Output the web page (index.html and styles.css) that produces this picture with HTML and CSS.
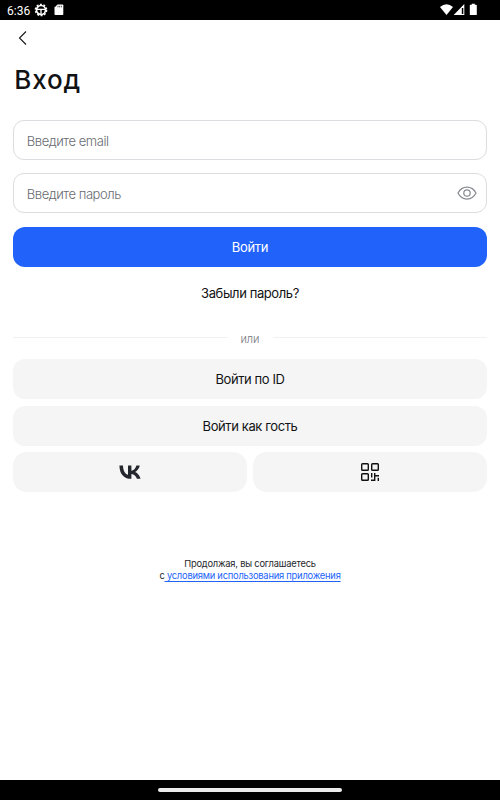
FILE: index.html
```html
<!DOCTYPE html>
<html lang="ru">
<head>
<meta charset="utf-8">
<title>Вход</title>
<link rel="stylesheet" href="styles.css">
</head>
<body>
<div class="screen">
  <header class="status">
    <span class="time">6:36</span>
    <svg class="gear" width="14" height="14" viewBox="0 0 14 14" fill="none" stroke="#fff"><circle cx="7" cy="7" r="4.500" stroke-width="1.700"/><circle cx="7" cy="7" r="5.700" stroke-width="1.300" stroke-dasharray="2 1.581"/><path d="M3 6.300h8M7 6v5" stroke-width="1.300"/></svg>
    <svg class="card" width="10" height="12" viewBox="0 0 10 12"><path d="M3.500 .5H8.500q.8 0 .8.800V10.200q0 .8-.8.8H1.300q-.8 0-.8-.8V3.500z" fill="#fff"/><path d="M4 1.800v1.500M5.700 1.800v1.500M7.400 1.800v1.500" stroke="#000" stroke-width=".7"/></svg>
    <svg class="radio" width="40" height="14" viewBox="0 0 40 14"><path d="M0 4Q6.500-1.500 13 4L6.500 12z" fill="#fff"/><path d="M24.300 1v11H13.700z" fill="#fff"/><path d="M21.800 5h1.500v6h-1.500z" fill="#000"/><path d="M31.800 1.700V.8h3v.9h1.300q.7 0 .7.700v9q0 .7-.7.700h-5.600q-.7 0-.7-.7v-9q0-.7.700-.7z" fill="#fff"/></svg>
  </header>
  <main class="page">
    <svg class="back" width="10" height="16" viewBox="0 0 10 16" fill="none" stroke="#15171a" stroke-width="1.100"><path d="M8 1.500 1.500 8 8 14.500"/></svg>
    <h1 class="title">Вход</h1>
    <div class="field"><span class="label">Введите email</span></div>
    <div class="field"><span class="label">Введите пароль</span>
      <svg width="20" height="14" viewBox="0 0 20 14" fill="none" stroke="#888b91" stroke-width="1.250"><path d="M1 7C3 3 6.200 1 10 1s7 2 9 6c-2 4-5.200 6-9 6S3 11 1 7z"/><circle cx="10" cy="7" r="3.200"/></svg>
    </div>
    <div class="button primary"><span>Войти</span></div>
    <div class="forgot"><span>Забыли пароль?</span></div>
    <div class="divider"><i></i><span>или</span><i></i></div>
    <div class="options">
      <div class="button"><span>Войти по ID</span></div>
      <div class="button"><span>Войти как гость</span></div>
      <div class="pair">
        <div class="button"><svg width="22" height="14" viewBox="0 0 22 14" fill="#24282e"><path d="M12 13.800C4.700 13.800.6 8.800.4.400H4c.1 6.200 2.800 8.800 5 9.300V.4h3.400v5.400c2.100-.2 4.300-2.700 5-5.400h3.400c-.6 3.200-2.900 5.600-4.600 6.500 1.700.8 4.400 2.900 5.400 6.900h-3.700c-.8-2.500-2.800-4.400-5.500-4.700v4.700z"/></svg></div>
        <div class="button"><svg width="20" height="20" viewBox="0 0 20 20" fill="none" stroke="#111" stroke-width="1.400"><rect x="1.700" y="1.700" width="6.600" height="6.600" rx=".8"/><rect x="11.700" y="1.700" width="6.600" height="6.600" rx=".8"/><rect x="1.700" y="11.700" width="6.600" height="6.600" rx=".8"/><path d="M11.700 11v4.500M11 18.300h3.700V11M14.700 13.700H19M18.300 15.700V19"/></svg></div>
      </div>
    </div>
    <footer class="terms">
      <div><span>Продолжая, вы соглашаетесь</span></div>
      <div><span>с<a> условиями использования приложения</a></span></div>
    </footer>
  </main>
  <div class="nav"><div class="handle"></div></div>
</div>
</body>
</html>
```
FILE: styles.css
```css
* { box-sizing: border-box; }
body { margin: 0; font-family: Inter, "Liberation Sans", sans-serif; color: #111214; }
svg { display: block; flex: none; }
span { white-space: nowrap; }
.screen { width: 500px; height: 800px; background: #fff; display: flex; flex-direction: column; overflow: hidden; }
.status { height: 20px; background: #000; color: #fff; display: flex; align-items: center; padding: 0 20px 0 7px; flex: none; }
.time { font: 12px/20px Roboto, sans-serif; width: 26.500px; padding-top: 1px; }
.card { margin-left: 6.500px; }
.radio { margin-left: auto; }
.page { flex: 1; padding: 10px 13.330px 0; }
.back { margin-left: 5px; }
.title { margin: 18px 0 0; padding-left: 1px; height: 32px; font-size: 26px; line-height: 32px; font-weight: 500; letter-spacing: .8px; }
.field { height: 40px; margin-top: 13.300px; border: 1px solid #dcdde0; border-radius: 11px; padding: 0 9px 0 12.500px; display: flex; align-items: center; justify-content: space-between; font-size: 13px; letter-spacing: -.45px; font-weight: 300; color: #686b71; }
.title + .field { margin-top: 24px; }
.label { padding-top: 2px; }
.button { height: 40px; border-radius: 12px; background: #f5f5f5; display: flex; align-items: center; justify-content: center; font-size: 13px; letter-spacing: -.4px; }
.primary { margin-top: 13.300px; background: #2163fa; color: #fff; letter-spacing: -.3px; }
.forgot { text-align: center; margin-top: 16.300px; height: 21px; font-size: 13px; line-height: 20px; letter-spacing: -.4px; }
.divider { display: flex; align-items: center; height: 16px; margin-top: 25.500px; font-size: 11px; font-weight: 300; color: #74777d; }
.divider i { flex: 1; height: 1px; background: #f1f1f2; }
.divider span { width: 45px; text-align: center; padding-top: 3px; }
.options { display: grid; gap: 6.670px; margin-top: 13.500px; }
.pair { display: grid; grid-template-columns: 1fr 1fr; gap: 6.670px; }
.pair .button { border-radius: 14px; }
.terms { margin-top: 66px; text-align: center; font-size: 9.300px; line-height: 12px; letter-spacing: -.2px; color: #25272a; }
.terms a { color: #2163fa; text-decoration: underline; text-underline-offset: 2px; text-decoration-thickness: 1px; }
.nav { height: 20px; background: #000; display: flex; justify-content: center; align-items: center; flex: none; }
.handle { width: 184px; height: 4px; border-radius: 2px; background: #ebebeb; }
```
